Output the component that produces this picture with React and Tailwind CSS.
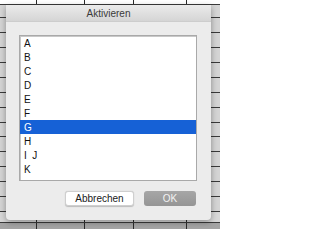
import React from "react";

const rows = [
  { h: "h-[5px]", bg: "bg-white" },
  { h: "h-[13px]", bg: "bg-[#d6d6d6]" },
  { h: "h-[15px]", bg: "bg-[#d4d4d4]" },
  { h: "h-[15px]", bg: "bg-[#d4d4d4]" },
  { h: "h-[15px]", bg: "bg-[#d4d4d4]" },
  { h: "h-[15px]", bg: "bg-[#d4d4d4]" },
  { h: "h-[15px]", bg: "bg-[#d4d4d4]" },
  { h: "h-[15px]", bg: "bg-[#d4d4d4]" },
  { h: "h-[15px]", bg: "bg-[#d4d4d4]" },
  { h: "h-[14px]", bg: "bg-[#d4d4d4]" },
  { h: "h-[15px]", bg: "bg-[#d4d4d4]" },
  { h: "h-[15px]", bg: "bg-[#d4d4d4]" },
  { h: "h-[15px]", bg: "bg-[#d4d4d4]" },
  { h: "h-[15px]", bg: "bg-[#d4d4d4]" },
  { h: "h-[15px]", bg: "bg-[#d4d4d4]" },
  { h: "h-[11px]", bg: "bg-[#d8d8d8]" },
];

const items = ["A", "B", "C", "D", "E", "F", "G", "H", "I  J", "K"];

// sheet cells: column lines at x 36, 84, 133, 186
const Cells = () => (
  <>
    <div className="w-[37px] h-full border-r border-[#2a2a2a]"></div>
    <div className="w-[48px] h-full border-r border-[#2a2a2a]"></div>
    <div className="w-[49px] h-full border-r border-[#2a2a2a]"></div>
    <div className="w-[53px] h-full border-r border-[#2a2a2a]"></div>
    <div className="flex-1 h-full"></div>
  </>
);

const App = () => {
  const selected = "G";

  return (
    <div
      className="relative w-[220px] h-[229px] overflow-hidden bg-[#d4d4d4]"
      style={{ fontFamily: '"Liberation Sans", Arial, sans-serif' }}
    >
      {/* spreadsheet behind the sheet dialog */}
      <div className="flex flex-col">
        {rows.map((r, i) => (
          <div key={i} className={`flex ${r.h} ${r.bg} border-b border-[#3a3a3a]`}>
            <Cells />
          </div>
        ))}
        <div className="flex h-[7px] bg-[#a4a4a4]">
          <Cells />
        </div>
      </div>

      {/* dialog */}
      <div className="absolute left-[6px] top-[5px] w-[205px] h-[215px] flex flex-col bg-[#ececec] rounded-b-[4px] shadow-[0_2px_6px_rgba(0,0,0,0.35)]">
        <div className="h-[17px] flex items-center justify-center bg-gradient-to-b from-[#ebebeb] to-[#d5d5d5] border-b border-[#cdcdcd] text-[10px] text-[#3a3a3a]">
          Aktivieren
        </div>

        <div className="flex flex-col pt-[13px] pl-[13px] pr-[14px]">
          <div className="w-[178px] h-[146px] bg-white border border-[#a9a9a9] shadow-[inset_1px_1px_0_#c8c8c8] pb-[4px]">
            {items.map((it) => (
              <div
                key={it}
                className={`h-[14px] flex items-center pl-[4px] text-[10px] whitespace-pre ${
                  it === selected ? "bg-[#1661d6] text-white" : "text-[#111]"
                }`}
              >
                {it}
              </div>
            ))}
          </div>

          <div className="flex justify-end gap-[10px] mt-[10px] pr-[1px]">
            <button className="w-[69px] h-[15px] flex items-center justify-center bg-white border border-[#cfcfcf] rounded-[3px] shadow-[0_0.5px_1px_rgba(0,0,0,0.2)] text-[10px] text-[#1a1a1a]">
              Abbrechen
            </button>
            <button className="w-[52px] h-[15px] flex items-center justify-center bg-gradient-to-b from-[#a6a6a6] to-[#959595] rounded-[3px] text-[10px] text-[#f2f2f2]">
              OK
            </button>
          </div>
        </div>
      </div>
    </div>
  );
};

export default App;
